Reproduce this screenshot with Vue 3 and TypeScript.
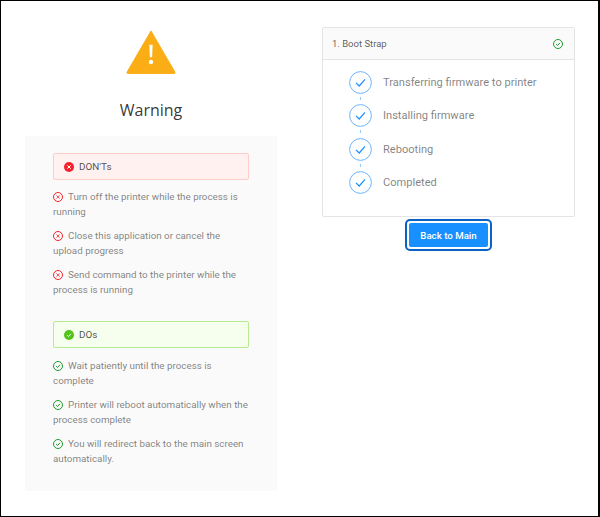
<script setup lang="ts">
const donts: string[] = [
  'Turn off the printer while the process is running',
  'Close this application or cancel the upload progress',
  'Send command to the printer while the process is running',
]
const dos: string[] = [
  'Wait patiently until the process is complete',
  'Printer will reboot automatically when the process complete',
  'You will redirect back to the main screen automatically.',
]
const steps: string[] = ['Transferring firmware to printer', 'Installing firmware', 'Rebooting', 'Completed']
</script>

<template>
  <div class="page">
    <section class="left">
      <svg class="warn" width="50" height="44" viewBox="0 0 52 46">
        <path d="M26 1 L51 44 Q51.500 45.500 50 45.500 L2 45.500 Q.5 45.500 1 44 Z" fill="#faad14" stroke="#faad14" stroke-linejoin="round" />
        <path d="M24.300 15.500h3.400l-.5 13h-2.400z" fill="#fff" />
        <circle cx="26" cy="33.500" r="2.300" fill="#fff" />
      </svg>
      <h1 class="title">Warning</h1>
      <div class="panel">
        <div class="alert alert-err">
          <svg class="alert-icon" width="10" height="10" viewBox="0 0 14 14">
            <circle cx="7" cy="7" r="7" fill="#f5222d" />
            <path d="M5 5l4 4M9 5l-4 4" stroke="#fff" stroke-width="1.400" stroke-linecap="round" />
          </svg>
          <span>DON'Ts</span>
        </div>
        <p v-for="t in donts" :key="t" class="item">
          <svg class="ico" width="10" height="10" viewBox="0 0 14 14" fill="none" stroke="#f5222d">
            <circle cx="7" cy="7" r="6.300" stroke-width="1.400" />
            <path d="M4.800 4.800l4.400 4.400M9.200 4.800l-4.400 4.400" stroke-width="1.100" />
          </svg>{{ t }}
        </p>
        <div class="alert alert-ok">
          <svg class="alert-icon" width="10" height="10" viewBox="0 0 14 14">
            <circle cx="7" cy="7" r="7" fill="#52c41a" />
            <path d="M4.300 7.200l1.900 1.900 3.500-3.800" stroke="#fff" stroke-width="1.400" fill="none" />
          </svg>
          <span>DOs</span>
        </div>
        <p v-for="t in dos" :key="t" class="item">
          <svg class="ico" width="10" height="10" viewBox="0 0 14 14" fill="none" stroke="#1f9a2e">
            <circle cx="7" cy="7" r="6.300" stroke-width="1.400" />
            <path d="M4.300 7.200l2 2 3.500-3.900" stroke-width="1.400" />
          </svg>{{ t }}
        </p>
      </div>
    </section>

    <section class="right">
      <div class="card">
        <header class="card-head">
          <span>1. Boot Strap</span>
          <svg width="10" height="10" viewBox="0 0 14 14" fill="none" stroke="#1f9a2e">
            <circle cx="7" cy="7" r="6.300" stroke-width="1.400" />
            <path d="M4.300 7.200l2 2 3.500-3.900" stroke-width="1.400" />
          </svg>
        </header>
        <ul class="steps">
          <li v-for="(s, i) in steps" :key="s" class="step">
            <svg class="step-ico" width="23" height="23" viewBox="0 0 23 23" fill="none">
              <circle cx="11.500" cy="11.500" r="10.900" stroke="#69b4ff" stroke-width="1" />
              <path d="M7 11.800l3.200 3.200 5.800-6.600" stroke="#1890ff" stroke-width="1.200" />
            </svg>
            <span>{{ s }}</span>
            <i v-if="i < steps.length - 1" class="dash"></i>
          </li>
        </ul>
      </div>
      <div class="btn-ring">
        <button class="btn" type="button">Back to Main</button>
      </div>
    </section>
  </div>
</template>

<style>
html, body { margin: 0; background: #fff; }
</style>

<style scoped>
.page {
  box-sizing: border-box;
  width: 600px;
  height: 517px;
  border: 1px solid #000;
  border-right-width: 2px;
  padding: 0 24px;
  display: flex;
  gap: 45px;
  align-items: flex-start;
  font-family: Roboto, "Open Sans", sans-serif;
  background: #fff;
}
.left {
  width: 252px;
  display: flex;
  flex-direction: column;
  align-items: center;
}
.warn { margin-top: 29px; display: block; }
.title {
  margin: 24px 0 14px;
  font-family: "Open Sans", sans-serif;
  font-size: 16px;
  line-height: 24px;
  font-weight: 400;
  color: rgba(0, 0, 0, 0.8);
}
.panel {
  box-sizing: border-box;
  width: 252px;
  height: 355px;
  background: #fafafa;
  padding: 17px 28px 0;
}
.alert {
  box-sizing: border-box;
  height: 27px;
  border-radius: 2px;
  display: flex;
  align-items: center;
  gap: 5px;
  padding-left: 10px;
  font-size: 9.900px;
  color: rgba(0, 0, 0, 0.7);
}
.alert-err { background: #fff1f0; border: 1px solid #ffccc7; margin-bottom: 9px; }
.alert-ok { background: #f6ffed; border: 1px solid #b7eb8f; margin-top: 24px; margin-bottom: 10px; }
.alert-icon { flex: none; }
.item {
  margin: 0 0 9px;
  font-size: 9.800px;
  line-height: 15px;
  color: rgba(0, 0, 0, 0.5);
}
.ico { margin-right: 5px; vertical-align: -1.500px; }
.right { width: 253px; margin-top: 26px; display: flex; flex-direction: column; align-items: center; }
.card {
  box-sizing: border-box;
  width: 253px;
  height: 190px;
  border: 1px solid #e4e4e4;
  border-radius: 2px;
}
.card-head {
  box-sizing: border-box;
  height: 32px;
  padding: 0 11.500px 0 9px;
  display: flex;
  align-items: center;
  justify-content: space-between;
  background: #fafafa;
  border-bottom: 1px solid #e4e4e4;
  font-size: 9.500px;
  color: rgba(0, 0, 0, 0.65);
}
.steps {
  list-style: none;
  margin: 0;
  padding: 10.800px 0 0 26px;
}
.step {
  position: relative;
  height: 33.500px;
  display: flex;
  align-items: flex-start;
  gap: 11px;
  font-size: 11.100px;
  line-height: 24px;
  color: rgba(0, 0, 0, 0.5);
}
.step-ico { flex: none; }
.dash {
  position: absolute;
  left: 11px;
  top: 26px;
  width: 1px;
  height: 3px;
  background: #91caff;
}
.btn-ring {
  margin-top: 2px;
  width: 87px;
  height: 32px;
  box-sizing: border-box;
  border: 2px solid #0a63c4;
  border-radius: 5px;
  display: flex;
  align-items: center;
  justify-content: center;
}
.btn {
  width: 79px;
  height: 24px;
  padding: 0;
  border: 0;
  border-radius: 2px;
  background: #1890ff;
  color: #fff;
  font-family: inherit;
  font-size: 9.700px;
  font-weight: 500;
}
</style>
